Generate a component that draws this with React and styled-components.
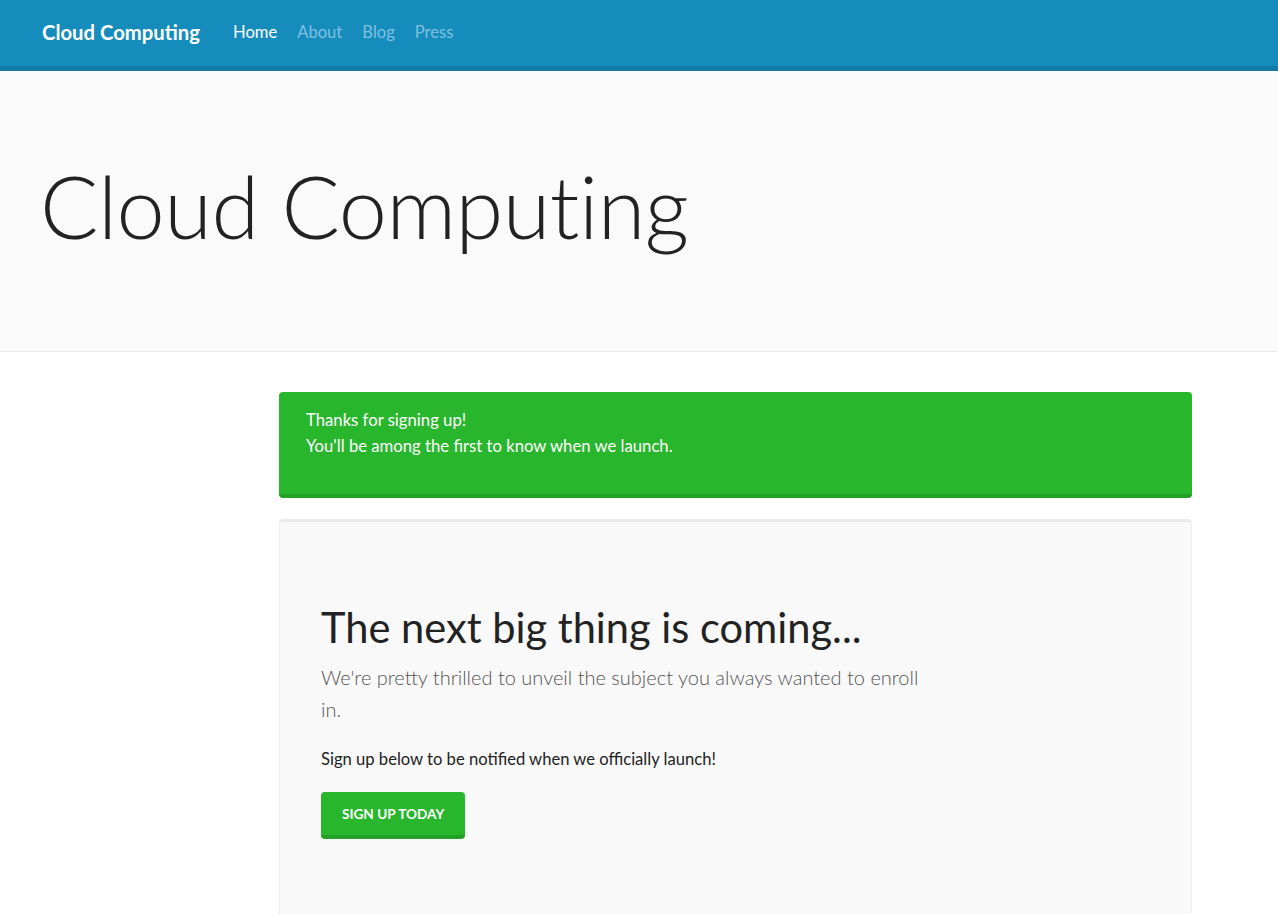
import React from "react";
import styled, { createGlobalStyle } from "styled-components";

const GlobalStyle = createGlobalStyle`
  html, body {
    margin: 0;
    padding: 0;
    background: #fff;
    font-family: Lato, "Open Sans", sans-serif;
    color: #222;
  }
  * { box-sizing: border-box; }
`;

const NavBar = styled.nav`
  height: 71px;
  background: #168cbc;
  border-bottom: 5px solid #127ba3;
  display: flex;
  align-items: center;
  padding: 0 42px;
  padding-bottom: 2px;
`;

const Brand = styled.a`
  color: #fff;
  font-size: 20.3px;
  font-weight: 700;
  margin-right: 33px;
  text-decoration: none;
`;

const NavLinks = styled.ul`
  display: flex;
  gap: 20px;
  list-style: none;
  margin: 0;
  padding: 0;
`;

const NavLink = styled.li`
  font-size: 16.6px;
  color: ${(p) => (p.$active ? "#fff" : "#7fc0e0")};
`;

const Jumbotron = styled.header`
  background: #fafafa;
  border-bottom: 1px solid #e8e8e8;
  height: 281px;
  display: flex;
  align-items: center;
  padding: 0 40px 12px;
`;

const HeroTitle = styled.h1`
  margin: 0;
  font-size: 86.5px;
  font-weight: 300;
  color: #222;
  letter-spacing: -0.5px;
`;

const Main = styled.main`
  padding: 40px 0 0 279px;
  width: 1192px;
`;

const Alert = styled.div`
  background: #28b62c;
  border-bottom: 4px solid #23a127;
  border-radius: 4px;
  color: #fff;
  font-size: 16.7px;
  line-height: 26px;
  padding: 15px 27px 35px;
  margin-bottom: 21px;
`;

const Well = styled.section`
  background: #f9f9f9;
  border: 1px solid #eee;
  border-top: 3px solid #ebebeb;
  border-radius: 4px 4px 0 0;
  padding: 80px 41px 90px;
  min-height: 400px;
`;

const Heading = styled.h2`
  margin: 0 0 9px;
  font-size: 41.6px;
  font-weight: 400;
  color: #222;
`;

const Lead = styled.p`
  margin: 0 0 24px;
  max-width: 615px;
  font-size: 20px;
  line-height: 32px;
  font-weight: 300;
  color: #555;
`;

const Note = styled.p`
  margin: 0 0 23px;
  font-size: 16.6px;
  color: #222;
`;

const Button = styled.button`
  background: #28b62c;
  border: none;
  border-bottom: 4px solid #23a127;
  border-radius: 4px;
  color: #fff;
  font-family: inherit;
  font-size: 13.6px;
  font-weight: 700;
  text-transform: uppercase;
  height: 47px;
  padding: 0 21px;
`;

export default function App() {
  return (
    <>
      <GlobalStyle />
      <NavBar>
        <Brand>Cloud Computing</Brand>
        <NavLinks>
          <NavLink $active>Home</NavLink>
          <NavLink>About</NavLink>
          <NavLink>Blog</NavLink>
          <NavLink>Press</NavLink>
        </NavLinks>
      </NavBar>
      <Jumbotron>
        <HeroTitle>Cloud Computing</HeroTitle>
      </Jumbotron>
      <Main>
        <Alert>
          Thanks for signing up!
          <br />
          You'll be among the first to know when we launch.
        </Alert>
        <Well>
          <Heading>The next big thing is coming...</Heading>
          <Lead>
            We're pretty thrilled to unveil the subject you always wanted to
            enroll in.
          </Lead>
          <Note>Sign up below to be notified when we officially launch!</Note>
          <Button>Sign up today</Button>
        </Well>
      </Main>
    </>
  );
}
